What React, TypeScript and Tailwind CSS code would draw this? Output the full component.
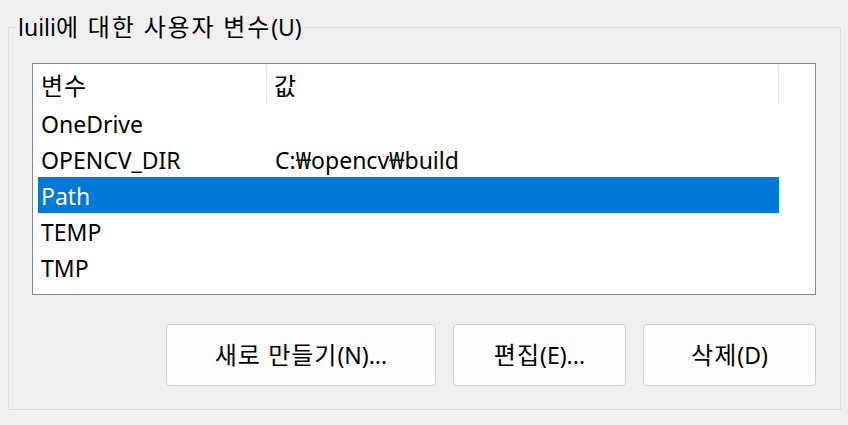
import React from "react";

const rows: { name: string; value: string; selected?: boolean }[] = [
  { name: "OneDrive", value: "" },
  { name: "OPENCV_DIR", value: "C:\u20A9opencv\u20A9build" },
  { name: "Path", value: "", selected: true },
  { name: "TEMP", value: "" },
  { name: "TMP", value: "" },
];

function K({ children }: { children: React.ReactNode }) {
  return <span className="text-[24px] tracking-[1px]">{children}</span>;
}

export default function App() {
  return (
    <div
      className="w-[848px] h-[425px] bg-[#f0f0f0] text-[23px] text-black overflow-hidden"
      style={{ fontFamily: '"Noto Sans", "Noto Sans CJK KR", sans-serif' }}
    >
      <fieldset className="ml-[8px] mt-[12px] w-[833px] h-[398px] border border-[#dcdcdc] pl-[23px] pr-[24px] flex flex-col">
        <legend className="ml-[-16px] px-[2px] leading-[30px] whitespace-nowrap">
          luili<span className="text-[24px] tracking-[1.8px]">에 대한 사용자 변수</span>(U)
        </legend>
        <div className="mt-[21px] w-[784px] h-[232px] border border-[#828790] bg-white flex flex-col">
          <div className="flex h-[41px] shrink-0">
            <div className="w-[234px] pl-[8px] pt-[3px] flex items-center border-r border-[#e5e5e5] my-[1px]">
              <K>변수</K>
            </div>
            <div className="w-[512px] pl-[7px] pt-[3px] flex items-center border-r border-[#e5e5e5] my-[1px]">
              <K>값</K>
            </div>
          </div>
          <div className="flex flex-col pl-[5px]">
            {rows.map((r) => (
              <div
                key={r.name}
                className={
                  "flex h-[36px] w-[741px] items-center pt-[2px] " +
                  (r.selected ? "bg-[#0078d7] text-white" : "")
                }
              >
                <div className="w-[230px] pl-[3px] whitespace-nowrap">{r.name}</div>
                <div className="pl-[7px] whitespace-nowrap">{r.value}</div>
              </div>
            ))}
          </div>
        </div>
        <div className="mt-[29px] flex justify-end gap-[17px]">
          <button className="w-[270px] h-[62px] rounded-[4px] border border-[#d0d0d0] bg-[#fdfdfd] flex items-center justify-center whitespace-nowrap">
            <K>새로 만들기</K>(N)...
          </button>
          <button className="w-[173px] h-[62px] rounded-[4px] border border-[#d0d0d0] bg-[#fdfdfd] flex items-center justify-center whitespace-nowrap">
            <K>편집</K>(E)...
          </button>
          <button className="w-[173px] h-[62px] rounded-[4px] border border-[#d0d0d0] bg-[#fdfdfd] flex items-center justify-center whitespace-nowrap">
            <K>삭제</K>(D)
          </button>
        </div>
      </fieldset>
    </div>
  );
}
